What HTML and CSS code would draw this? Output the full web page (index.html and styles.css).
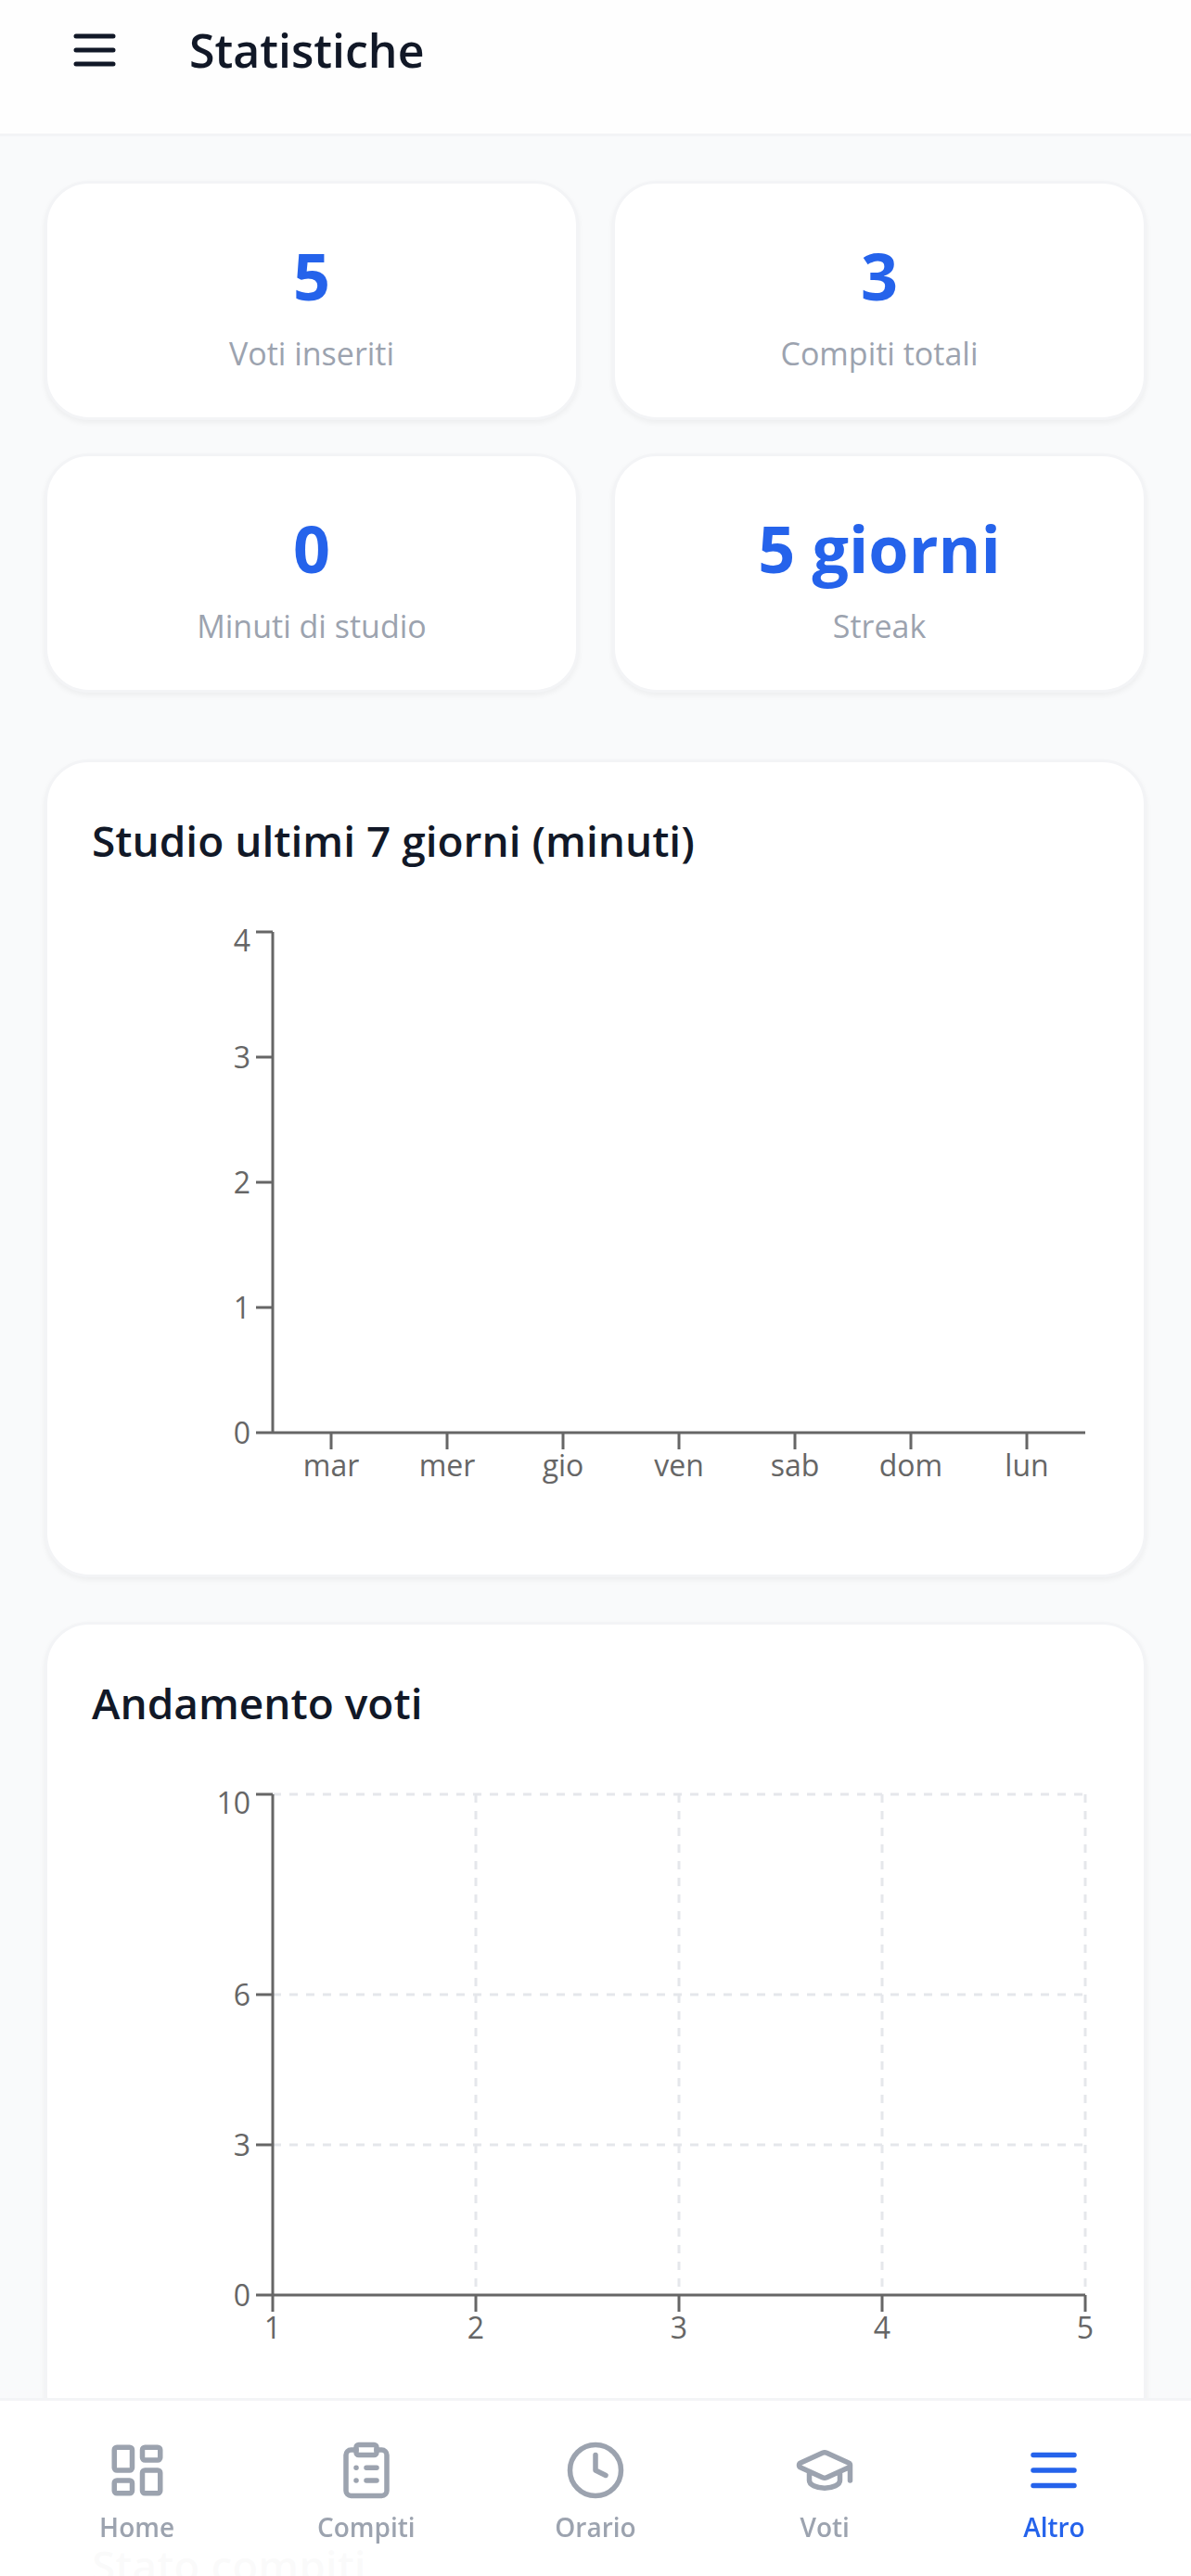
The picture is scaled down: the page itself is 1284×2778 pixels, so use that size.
FILE: index.html
```html
<!DOCTYPE html>
<html lang="it">
<head>
    <meta charset="UTF-8">
    <meta name="viewport" content="width=device-width, initial-scale=1.0">
    <title>Statistiche</title>
    <link rel="stylesheet" href="styles.css">
</head>
<body>
    <div class="app">
        <header class="header">
            <button type="button" class="menu-btn" aria-label="Apri menu">
                <svg class="icon" viewBox="0 0 24 24"><path d="M4 6h16M4 12h16M4 18h16"/></svg>
            </button>
            <h1>Statistiche</h1>
        </header>

        <main class="content">
            <section class="stats">
                <div class="card stat">
                    <p class="stat-value">5</p>
                    <p class="stat-label">Voti inseriti</p>
                </div>
                <div class="card stat">
                    <p class="stat-value">3</p>
                    <p class="stat-label">Compiti totali</p>
                </div>
                <div class="card stat">
                    <p class="stat-value">0</p>
                    <p class="stat-label">Minuti di studio</p>
                </div>
                <div class="card stat">
                    <p class="stat-value">5 giorni</p>
                    <p class="stat-label">Streak</p>
                </div>
            </section>

            <section class="card">
                <h2>Studio ultimi 7 giorni (minuti)</h2>
                <svg class="chart" viewBox="0 0 1086 660">
                    <path class="axis" d="M195 15V555M195 555H1071"/>
                    <path class="axis" d="M177 15h18M177 150h18M177 285h18M177 420h18M177 555h18"/>
                    <path class="axis" d="M258 555v18M383 555v18M508 555v18M633 555v18M758 555v18M883 555v18M1008 555v18"/>
                    <g class="ticks-y">
                        <text x="171" y="36">4</text>
                        <text x="171" y="162">3</text>
                        <text x="171" y="297">2</text>
                        <text x="171" y="432">1</text>
                        <text x="171" y="567">0</text>
                    </g>
                    <g class="ticks-x">
                        <text x="258" y="602">mar</text>
                        <text x="383" y="602">mer</text>
                        <text x="508" y="602">gio</text>
                        <text x="633" y="602">ven</text>
                        <text x="758" y="602">sab</text>
                        <text x="883" y="602">dom</text>
                        <text x="1008" y="602">lun</text>
                    </g>
                </svg>
            </section>

            <section class="card">
                <h2>Andamento voti</h2>
                <svg class="chart" viewBox="0 0 1086 660">
                    <path class="grid" d="M195 15H1071M195 231H1071M195 393H1071"/>
                    <path class="grid" d="M414 15V555M633 15V555M852 15V555M1071 15V555"/>
                    <path class="axis" d="M195 15V555M195 555H1071"/>
                    <path class="axis" d="M177 15h18M177 231h18M177 393h18M177 555h18"/>
                    <path class="axis" d="M195 555v18M414 555v18M633 555v18M852 555v18M1071 555v18"/>
                    <g class="ticks-y">
                        <text x="171" y="36">10</text>
                        <text x="171" y="243">6</text>
                        <text x="171" y="405">3</text>
                        <text x="171" y="567">0</text>
                    </g>
                    <g class="ticks-x">
                        <text x="195" y="602">1</text>
                        <text x="414" y="602">2</text>
                        <text x="633" y="602">3</text>
                        <text x="852" y="602">4</text>
                        <text x="1071" y="602">5</text>
                    </g>
                </svg>
            </section>

            <section class="card">
                <h2>Stato compiti</h2>
            </section>
        </main>

        <nav class="bottom-nav">
            <a href="#home">
                <svg class="icon" viewBox="0 0 24 24"><rect x="3" y="3" width="7" height="9" rx="1"/><rect x="14" y="3" width="7" height="5" rx="1"/><rect x="14" y="12" width="7" height="9" rx="1"/><rect x="3" y="16" width="7" height="5" rx="1"/></svg>
                <span>Home</span>
            </a>
            <a href="#compiti">
                <svg class="icon" viewBox="0 0 24 24"><rect x="8" y="2" width="8" height="4" rx="1"/><path d="M16 4h2a2 2 0 0 1 2 2v14a2 2 0 0 1-2 2H6a2 2 0 0 1-2-2V6a2 2 0 0 1 2-2h2M12 11h4M12 16h4M8 11h.01M8 16h.01"/></svg>
                <span>Compiti</span>
            </a>
            <a href="#orario">
                <svg class="icon" viewBox="0 0 24 24"><circle cx="12" cy="12" r="10"/><path d="M12 6v6l4 2"/></svg>
                <span>Orario</span>
            </a>
            <a href="#voti">
                <svg class="icon" viewBox="0 0 24 24"><path d="M21.42 10.922a1 1 0 0 0-.019-1.838L12.83 5.18a2 2 0 0 0-1.66 0L2.6 9.08a1 1 0 0 0 0 1.832l8.57 3.908a2 2 0 0 0 1.66 0zM22 10v6M6 12.5V16a6 3 0 0 0 12 0v-3.5"/></svg>
                <span>Voti</span>
            </a>
            <a href="#altro" class="active">
                <svg class="icon" viewBox="0 0 24 24"><path d="M4 6h16M4 12h16M4 18h16"/></svg>
                <span>Altro</span>
            </a>
        </nav>
    </div>
</body>
</html>
```
FILE: styles.css
```css
* {
    box-sizing: border-box;
}

body {
    font-family: "Segoe UI", "Open Sans", sans-serif;
    background-color: #f9fafb;
    color: #111827;
    margin: 0;
}

h1, h2, p {
    margin: 0;
}

.app {
    height: 100vh;
    overflow-y: auto;
    scrollbar-width: none;
}

.icon {
    width: 66px;
    height: 66px;
    fill: none;
    stroke: currentColor;
    stroke-width: 2;
    stroke-linecap: round;
    stroke-linejoin: round;
}

.header {
    position: sticky;
    top: 0;
    z-index: 1;
    display: flex;
    align-items: center;
    gap: 48px;
    padding: 0 48px 36px;
    background: #fefefe;
    border-bottom: 3px solid #f3f4f6;
}

.menu-btn {
    display: flex;
    padding: 24px;
    border: none;
    background: none;
    color: inherit;
    cursor: pointer;
}

.menu-btn .icon {
    width: 60px;
    height: 60px;
}

h1 {
    font-size: 50px;
    line-height: 84px;
    font-weight: 600;
}

h2 {
    font-size: 46px;
    line-height: 72px;
    font-weight: 600;
    margin-bottom: 48px;
}

.content {
    display: flex;
    flex-direction: column;
    gap: 48px;
    padding: 48px 48px 240px;
}

.stats {
    display: grid;
    grid-template-columns: 1fr 1fr;
    gap: 36px;
    margin-bottom: 24px;
}

.card {
    background: #fff;
    border: 3px solid #f3f4f6;
    border-radius: 48px;
    padding: 48px;
    box-shadow: 0 3px 6px rgba(0, 0, 0, 0.05);
}

.stat {
    padding: 51px 48px 45px;
    text-align: center;
}

.stat-value {
    font-size: 70px;
    line-height: 96px;
    font-weight: 700;
    color: #2563eb;
}

.stat-label {
    margin-top: 12px;
    font-size: 34px;
    line-height: 48px;
    color: #9ca3af;
}

.chart {
    display: block;
    width: 100%;
}

.axis {
    fill: none;
    stroke: #666;
    stroke-width: 3;
}

.grid {
    fill: none;
    stroke: #e5e7eb;
    stroke-width: 3;
    stroke-dasharray: 9 9;
}

.chart text {
    font-size: 32px;
    fill: #666;
}

.ticks-x {
    text-anchor: middle;
}

.ticks-y {
    text-anchor: end;
}

.bottom-nav {
    position: fixed;
    left: 0;
    right: 0;
    bottom: 0;
    z-index: 1;
    display: flex;
    height: 192px;
    padding: 12px 24px 0;
    background: rgba(255, 255, 255, 0.98);
    border-top: 3px solid #f3f4f6;
}

.bottom-nav a {
    flex: 1;
    display: flex;
    flex-direction: column;
    align-items: center;
    justify-content: center;
    gap: 6px;
    font-size: 28px;
    line-height: 45px;
    font-weight: 600;
    color: #9ca3af;
    text-decoration: none;
}

.bottom-nav a.active {
    color: #2563eb;
}
```
